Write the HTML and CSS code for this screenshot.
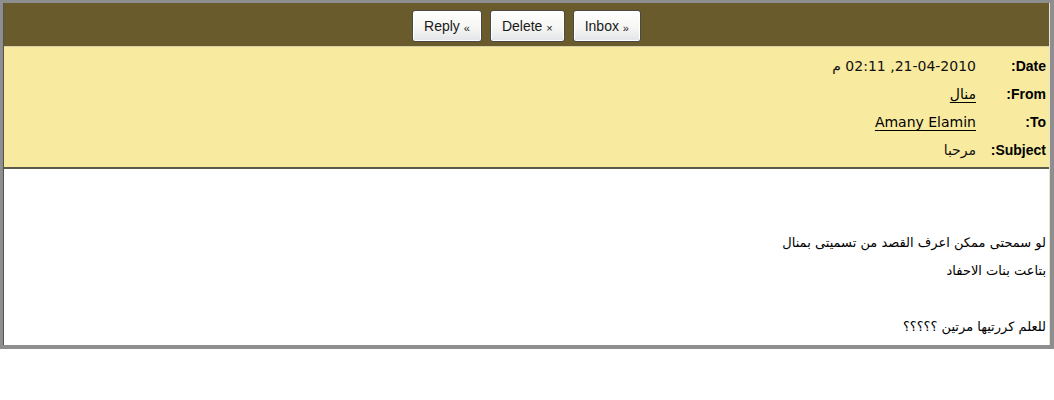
FILE: index.html
```html
<!DOCTYPE html>
<html>
<head>
<meta charset="utf-8">
<link rel="stylesheet" href="styles.css">
</head>
<body>
<div class="frame">
  <div class="inner">
    <div class="toolbar">
      <button class="btn">Reply <span class="glyph">«</span></button>
      <button class="btn">Delete <span class="glyph">×</span></button>
      <button class="btn">Inbox <span class="glyph">»</span></button>
    </div>
    <div class="meta" dir="rtl">
      <div class="row"><span class="label">Date:</span><span class="value">21-04-2010, 02:11 م</span></div>
      <div class="row"><span class="label">From:</span><span class="value"><a class="link">منال</a></span></div>
      <div class="row"><span class="label">To:</span><span class="value"><a class="link">Amany Elamin</a></span></div>
      <div class="row"><span class="label">Subject:</span><span class="value">مرحبا</span></div>
    </div>
    <div class="message" dir="rtl">
      <p class="line">&nbsp;</p>
      <p class="line">&nbsp;</p>
      <p class="line">لو سمحتى ممكن اعرف القصد من تسميتى بمنال</p>
      <p class="line">بتاعت بنات الاحفاد</p>
      <p class="line">&nbsp;</p>
      <p class="line">للعلم كررتيها مرتين ؟؟؟؟؟</p>
    </div>
  </div>
</div>
</body>
</html>
```
FILE: styles.css
```css
html, body {
  margin: 0;
  padding: 0;
  background: #ffffff;
}
body {
  font-family: "Liberation Sans", "DejaVu Sans", Arial, sans-serif;
  font-size: 14px;
  color: #000;
}
.frame {
  width: 1047px;
  border: 3px solid #8e8e8e;
  border-right-width: 4px;
  border-bottom-width: 4px;
}
.inner {
  border-left: 1px solid #55524a;
  border-right: 1px solid #e8e4d0;
}
.toolbar {
  background: #6a5b2c;
  height: 36px;
  padding-top: 7px;
  border-bottom: 1px solid #d8d0a8;
  display: flex;
  justify-content: center;
  gap: 8px;
}
.btn {
  height: 32px;
  padding: 0 11px;
  font-family: "Liberation Sans", Arial, sans-serif;
  font-size: 14px;
  color: #1a1a1a;
  background: linear-gradient(#ffffff, #f6f6f4 55%, #e2e4e8);
  border: 1px solid #4a4a44;
  border-radius: 3px;
  box-shadow: inset 0 0 0 1px #ffffff;
}
.glyph {
  font-size: 11px;
  position: relative;
  top: 1px;
}
.meta {
  background: #f8ea9f;
  padding: 5px 3px 3px 0;
  border-bottom: 2px solid #5d5a4a;
}
.row {
  display: flex;
  height: 28px;
  align-items: center;
}
.label {
  width: 59px;
  padding-left: 11px;
  font-weight: bold;
  text-align: right;
}
.value {
  font-family: "DejaVu Sans", sans-serif;
  font-size: 14px;
  color: #111;
}
.link {
  color: #000;
  text-decoration: underline;
  text-underline-offset: 3px;
}
.message {
  background: #fff;
  padding: 4px 3px 4px 0;
  font-family: "DejaVu Sans", sans-serif;
  font-size: 13px;
}
.line {
  margin: 0;
  height: 28px;
  line-height: 28px;
}
```
